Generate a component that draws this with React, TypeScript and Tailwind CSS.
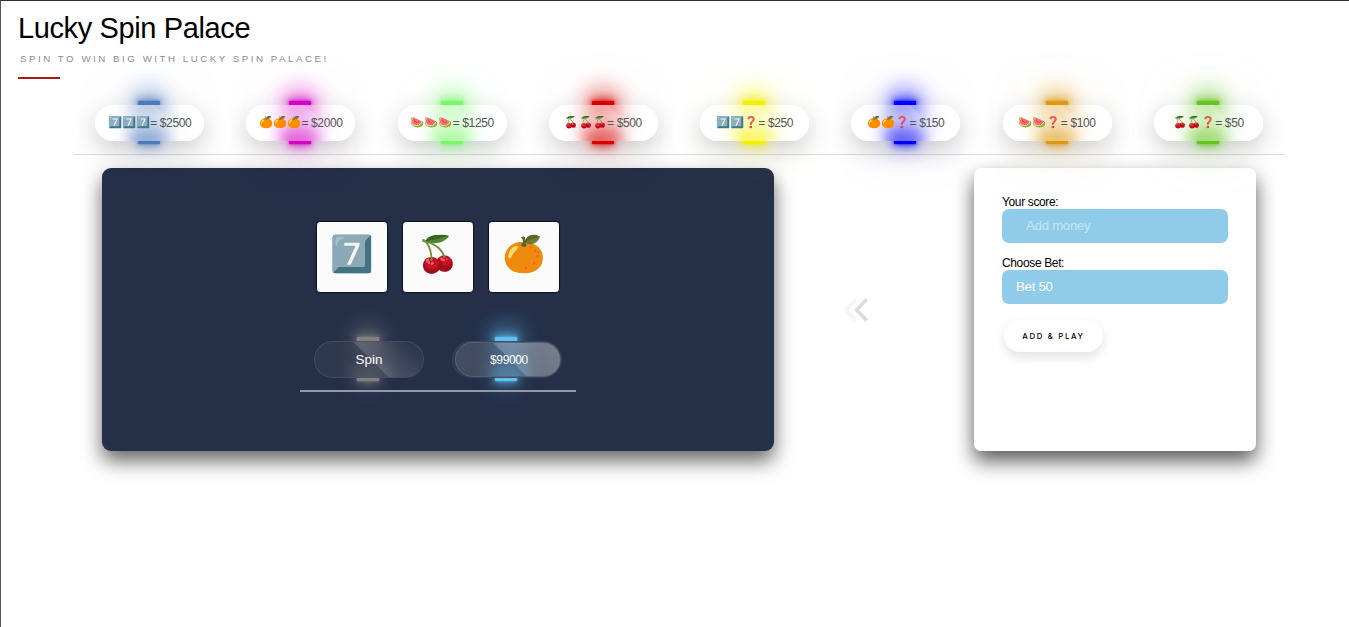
import React from "react";

type Prize = { symbols: string; amount: string; glow: string };

const prizes: Prize[] = [
  { symbols: "7️⃣7️⃣7️⃣", amount: "$2500", glow: "text-[#4f79bd]" },
  { symbols: "🍊🍊🍊", amount: "$2000", glow: "text-[#d400c4]" },
  { symbols: "🍉🍉🍉", amount: "$1250", glow: "text-[#7cf76c]" },
  { symbols: "🍒🍒🍒", amount: "$500", glow: "text-[#d60000]" },
  { symbols: "7️⃣7️⃣❓", amount: "$250", glow: "text-[#f4f000]" },
  { symbols: "🍊🍊❓", amount: "$150", glow: "text-[#0000fa]" },
  { symbols: "🍉🍉❓", amount: "$100", glow: "text-[#dc9a12]" },
  { symbols: "🍒🍒❓", amount: "$50", glow: "text-[#66c41f]" },
];

function NeonBars({ glow }: { glow: string }) {
  const bar =
    "absolute left-[43px] w-[22px] bg-current shadow-[0_0_3px_currentColor,0_0_10px_1px_currentColor,0_0_22px_1px_currentColor]";
  return (
    <span className={glow}>
      <span className="absolute left-[34px] top-[-22px] h-[36px] w-[40px] rounded-full bg-current opacity-20 blur-[10px]" />
      <span className={`${bar} top-[-4px] h-[4px] rounded-t-[1px]`} />
      <span className={`${bar} bottom-[-2.5px] h-[2.5px] rounded-b-[1px]`} />
    </span>
  );
}

/* Diffused light of the bars as seen through the glass. */
function InnerGlow({ glow }: { glow: string }) {
  return (
    <span className={glow}>
      <span className="absolute left-[29px] top-[-8px] h-[50px] w-[50px] rounded-full bg-current opacity-20 blur-[10px]" />
      <span className="absolute left-[36px] top-[-10px] h-[20px] w-[36px] rounded-full bg-current opacity-30 blur-[7px]" />
      <span className="absolute bottom-[-12px] left-[34px] h-[26px] w-[40px] rounded-full bg-current opacity-55 blur-[7px]" />
    </span>
  );
}

function PrizePill({ symbols, amount, glow }: Prize) {
  return (
    <div className="relative h-[36px] w-[109px]">
      <span className={`absolute left-[54px] top-[18px] size-px rounded-full opacity-[0.02] shadow-[0_0_45px_50px_currentColor] ${glow}`} />
      <span className="absolute inset-0 rounded-full shadow-[0_8px_26px_rgba(0,0,0,0.2)]" />
      <NeonBars glow={glow} />
      <div className="relative flex size-full items-center justify-center overflow-hidden rounded-full bg-white/90 text-[#555]">
        <InnerGlow glow={glow} />
        <span className="absolute left-[23px] h-full w-[54px] skew-x-[45deg] bg-linear-to-l from-white/20 to-transparent" />
        <span className="relative flex h-[16px] items-center whitespace-nowrap pb-px">
          <span className="text-[11.3px]">{symbols}</span>
          <span className="text-[12px] tracking-[-0.36px]">= {amount}</span>
        </span>
      </div>
    </div>
  );
}

function Reel({ symbol }: { symbol: string }) {
  return (
    <div className="flex size-[72px] items-center justify-center rounded-[4px] border border-[#0c1224] bg-[#fbfbfb] pb-[7px] text-[35px] leading-none shadow-[0_0_1px_#0b1020]">
      <span className="brightness-[.97] saturate-[.9]">{symbol}</span>
    </div>
  );
}

export default function App() {
  return (
    <div className="h-[627px] w-full overflow-hidden border-l border-t border-l-[#555] border-t-[#302f30] bg-white font-['Liberation_Sans',Arial,'Noto_Color_Emoji',sans-serif] text-black">
      <header className="h-[103px] pl-[17px] pt-[10px]">
        <h1 className="text-[29px] leading-[34px] tracking-[-0.38px]">Lucky Spin Palace</h1>
        <p className="ml-[2px] mt-[7px] text-[9.7px] uppercase leading-[13px] tracking-[2.54px] text-[#8c8c8c]">
          Spin to win big with Lucky Spin Palace!
        </p>
        <div className="mt-[12px] h-[2px] w-[42px] bg-[#b01818]" />
      </header>

      <section className="relative z-10 ml-[73px] grid h-[51px] w-[1210px] grid-cols-8 justify-items-center border-b border-[#dcdcdc] pt-px">
        {prizes.map((p) => (
          <PrizePill key={p.symbols} {...p} />
        ))}
      </section>

      <main className="ml-[101px] mt-[13px] flex h-[283px] w-[1154px] items-stretch">
        <section className="flex w-[672px] flex-col items-center rounded-[9px] bg-[#242f48] pt-[53px] shadow-[0_10px_20px_rgba(0,0,0,0.6)]">
          <div className="flex gap-[14px]">
            <Reel symbol="7️⃣" />
            <Reel symbol="🍒" />
            <Reel symbol="🍊" />
          </div>
          <div className="mt-[48px] flex h-[51px] w-[276px] justify-between border-b-2 border-[#9499a5] px-[14px]">
            <button className="relative h-[37px] w-[110px]">
              <NeonBars glow="text-[#85807f]" />
              <span className="relative flex size-full items-center justify-center overflow-hidden rounded-full border border-white/10 bg-[#303a50]/85 text-[13.4px] text-white">
                <span className="opacity-50"><InnerGlow glow="text-[#928b87]" /></span>
                <span className="absolute left-[56px] h-full w-[54px] skew-x-[45deg] bg-linear-to-r from-white/15 to-transparent" />
                <span className="relative pt-px">Spin</span>
              </span>
            </button>
            <div className="relative h-[37px] w-[110px]">
              <NeonBars glow="text-[#64bdf3]" />
              <div className="relative flex size-full items-center justify-center overflow-hidden rounded-full border border-white/5 bg-[#303a50]/85 text-[12px] tracking-[-0.36px] text-white">
                <span className="absolute inset-y-0 left-[2px] right-0 overflow-hidden rounded-full border border-white/10 bg-white/10">
                  <span className="opacity-70"><InnerGlow glow="text-[#64bdf3]" /></span>
                  <span className="absolute left-[54px] h-full w-[80px] skew-x-[45deg] bg-linear-to-r from-white/20 to-white/30" />
                </span>
                <span className="relative pl-[4px] pt-px">$99000</span>
              </div>
            </div>
          </div>
        </section>

        <div className="flex flex-1 items-center justify-center pr-[37px]">
          <svg width="26" height="26" viewBox="0 0 26 26" fill="none" strokeWidth="3.4">
            <path d="M13 2.5 2.8 13 13 23.5" stroke="#f4f4f6" />
            <path d="M23.7 2.5 13.4 13l10.3 10.5" stroke="#d9dbe0" />
          </svg>
        </div>

        <section className="w-[282px] rounded-[7px] bg-white px-[28px] pt-[28px] shadow-[0_10px_20px_rgba(0,0,0,0.65)]">
          <label className="block text-[12px] leading-[13px] tracking-[-0.36px]">Your score:</label>
          <input
            className="block h-[34px] w-full rounded-[7px] bg-[#8fcce9] pb-px pl-[24px] text-[13.2px] tracking-[-0.25px] text-white outline-none placeholder:text-white/50"
            placeholder="Add money"
          />
          <label className="mt-[14px] block text-[12px] leading-[13px] tracking-[-0.36px]">Choose Bet:</label>
          <div className="flex h-[34px] items-center rounded-[7px] bg-[#8fcce9] pl-[14px] text-[13.2px] tracking-[-0.25px] text-white">
            Bet 50
          </div>
          <button className="ml-[2px] mt-[16px] flex h-[32px] w-[99px] items-center justify-center rounded-full bg-white pt-px font-[Inter,sans-serif] text-[7.8px] font-medium uppercase tracking-[1.65px] text-black shadow-[0_5px_11px_rgba(0,0,0,0.12)]">
            Add &amp; Play
          </button>
        </section>
      </main>
    </div>
  );
}
